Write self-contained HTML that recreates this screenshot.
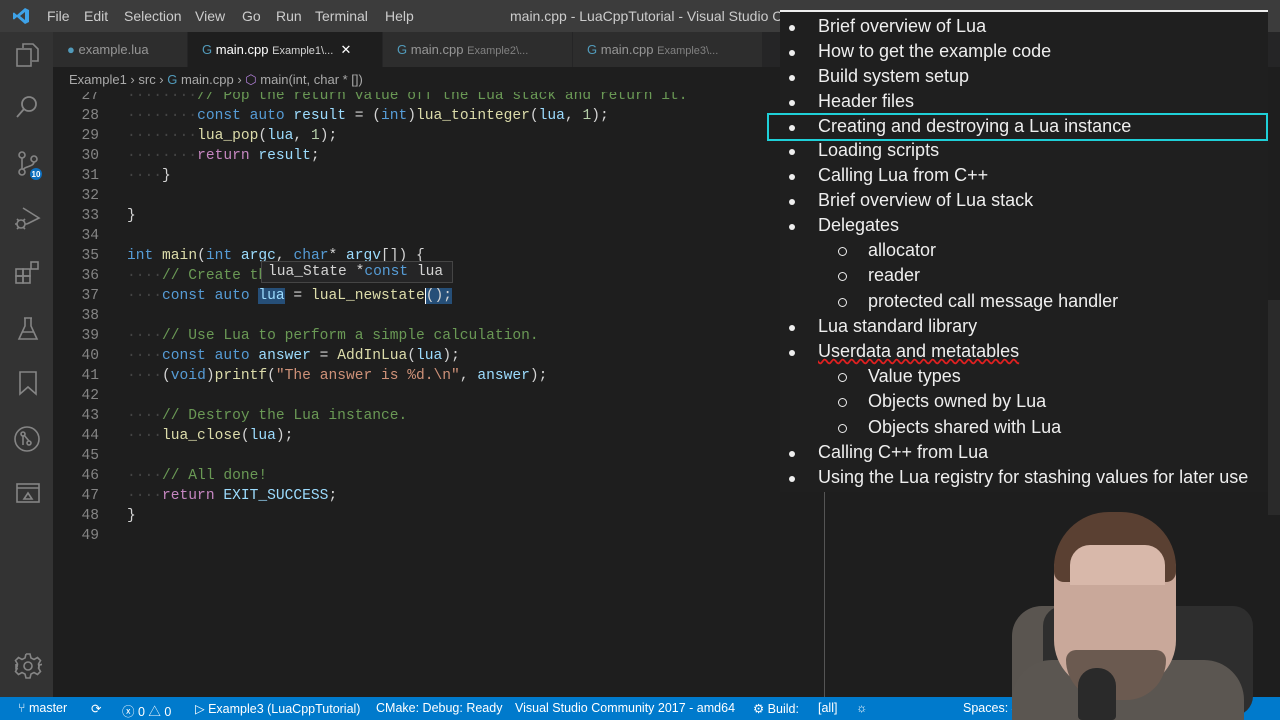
<!DOCTYPE html>
<html><head><meta charset="utf-8"><style>
*{margin:0;padding:0;box-sizing:border-box}
body{width:1280px;height:720px;overflow:hidden;background:#1e1e1e;font-family:"Liberation Sans",sans-serif;position:relative}
.abs{position:absolute}
#title{left:0;top:0;width:1280px;height:32px;background:#3c3c3c;color:#ccc;font-size:14px}
#title span{position:absolute;top:8px}
#act{left:0;top:32px;width:53px;height:665px;background:#333}
#tabs{left:53px;top:32px;width:1227px;height:35px;background:#252526}
.tab{position:absolute;top:0;height:35px;line-height:35px;font-size:13px;color:#969696;background:#2d2d2d;border-right:1px solid #252526;padding-left:14px}
.tab .s{font-size:11px;opacity:.8}
#crumb{left:53px;top:67px;width:1227px;height:25px;background:#1e1e1e;color:#aaa;font-size:13px;line-height:25px;padding-left:16px}
#code{left:53px;top:92px;width:727px;height:605px;overflow:hidden}
.ln{position:absolute;left:0;width:46px;text-align:right;color:#858585;font:14.6px/20px "Liberation Mono",monospace}
.cl{position:absolute;left:74px;white-space:pre;color:#d4d4d4;font:14.6px/20px "Liberation Mono",monospace}
.k{color:#569cd6}.c{color:#6a9955}.f{color:#dcdcaa}.v{color:#9cdcfe}.r{color:#c586c0}.n{color:#b5cea8}.st{color:#ce9178}.w{color:#444}
#status{left:0;top:697px;width:1280px;height:23px;background:#007acc;color:#fff;font-size:12.5px}
#status span{position:absolute;top:4px}
#slide{left:780px;top:10px;width:488px;height:482px;background:#1f1f1f;border-top:2px solid #eee;color:#eee;font-family:"Liberation Sans",sans-serif;font-size:18px}
.it{position:absolute;left:38px;white-space:nowrap}
.it:before{content:"";position:absolute;left:-29px;top:9px;width:6px;height:6px;border-radius:50%;background:#eee}
.sub{left:88px}
.sub:before{left:-30px;top:7px;width:7px;height:7px;background:none;border:1.5px solid #eee}
svg{position:absolute}
</style></head><body>
<div id="title" class="abs">
<svg style="left:12px;top:7px" width="18" height="18" viewBox="0 0 18 18"><path d="M13 1 L17 3 V15 L13 17 L5 10 L2 12.5 L1 12 V6 L2 5.5 L5 8 Z M13 5 L8 9 L13 13 Z" fill="#3ea2e8"/></svg>
<span style="left:47px">File</span><span style="left:84px">Edit</span><span style="left:124px">Selection</span><span style="left:195px">View</span><span style="left:242px">Go</span><span style="left:276px">Run</span><span style="left:315px">Terminal</span><span style="left:385px">Help</span>
<span style="left:510px">main.cpp - LuaCppTutorial - Visual Studio Code</span>
</div>
<div id="act" class="abs">
<svg style="left:14px;top:10px" width="26" height="26" viewBox="0 0 26 26" fill="none" stroke="#858585" stroke-width="1.6"><path d="M9 6V2h10l5 5v12h-6"/><rect x="3" y="7" width="14" height="17"/></svg>
<svg style="left:14px;top:62px" width="26" height="26" viewBox="0 0 26 26" fill="none" stroke="#858585" stroke-width="1.8"><circle cx="15" cy="10" r="7"/><path d="M10 15 3 23"/></svg>
<svg style="left:14px;top:118px" width="30" height="30" viewBox="0 0 30 30" fill="none" stroke="#858585" stroke-width="1.6"><circle cx="8" cy="5" r="3"/><circle cx="8" cy="22" r="3"/><circle cx="20" cy="9" r="3"/><path d="M8 8v11M20 12c0 5-10 4-11 8"/><circle cx="22" cy="24" r="6" fill="#0e70c0" stroke="none"/><text x="22" y="27" font-size="8" fill="#fff" stroke="none" text-anchor="middle" font-family="Liberation Sans" font-weight="bold">10</text></svg>
<svg style="left:13px;top:172px" width="28" height="28" viewBox="0 0 28 28" fill="none" stroke="#858585" stroke-width="1.6"><path d="M10 4 26 14 14 20"/><circle cx="8" cy="20" r="4"/><path d="M2 20h2M12 20h2M4 15l2 2M12 15l-2 2M4 25l2-2M12 25l-2-2"/></svg>
<svg style="left:14px;top:228px" width="28" height="28" viewBox="0 0 28 28" fill="none" stroke="#858585" stroke-width="1.6"><rect x="2" y="9" width="7" height="7"/><rect x="9" y="9" width="7" height="7"/><rect x="2" y="16" width="7" height="7"/><rect x="9" y="16" width="7" height="7"/><rect x="17" y="2" width="7" height="7"/></svg>
<svg style="left:16px;top:284px" width="24" height="26" viewBox="0 0 24 26" fill="none" stroke="#858585" stroke-width="1.6"><path d="M8 2h8M9 2v8L3 23h18L15 10V2M6 16h12"/></svg>
<svg style="left:18px;top:338px" width="20" height="26" viewBox="0 0 20 26" fill="none" stroke="#858585" stroke-width="1.6"><path d="M2 2h16v22l-8-7-8 7z"/></svg>
<svg style="left:13px;top:393px" width="28" height="28" viewBox="0 0 28 28" fill="none" stroke="#858585" stroke-width="1.6"><circle cx="14" cy="14" r="12"/><circle cx="10" cy="9" r="2"/><circle cx="16" cy="18" r="2"/><path d="M10 11v9M11 10l5 6"/></svg>
<svg style="left:15px;top:450px" width="26" height="22" viewBox="0 0 26 22" fill="none" stroke="#858585" stroke-width="1.6"><rect x="2" y="2" width="22" height="18"/><path d="M2 6h22M9 17l4-6 4 6z"/></svg>
<svg style="left:14px;top:620px" width="28" height="28" viewBox="0 0 28 28" fill="none" stroke="#858585" stroke-width="1.6"><circle cx="14" cy="14" r="4"/><path d="M12 2h4l1 4 3 1.5 3.5-2 3 3-2 3.5L25 15l0 0 -1 0 0 0 M12 2l-1 4-3 1.5-3.5-2-3 3 2 3.5L3 15l-1 1v-4M14 26h-2l-1-4-3-1.5-3.5 2-3-3 2-3.5M14 26h2l1-4 3-1.5 3.5 2 3-3-2-3.5 1-3 4-1v-3"/></svg>
</div>
<div id="tabs" class="abs">
<div class="tab" style="left:0;width:135px"><span style="color:#519aba">●</span> example.lua</div>
<div class="tab" style="left:135px;width:195px;background:#1e1e1e;color:#fff"><span style="color:#519aba">G</span> main.cpp <span class="s">Example1\...</span> &nbsp;✕</div>
<div class="tab" style="left:330px;width:190px"><span style="color:#519aba">G</span> main.cpp <span class="s">Example2\...</span></div>
<div class="tab" style="left:520px;width:190px"><span style="color:#519aba">G</span> main.cpp <span class="s">Example3\...</span></div>
</div>
<div id="crumb" class="abs">Example1 › src › <span style="color:#519aba">G</span> main.cpp › <span style="color:#b180d7">⬡</span> main(int, char * [])</div>
<div id="code" class="abs">
<div style="position:absolute;top:-6px;left:0;width:727px">
<div class="ln" style="top:0">27</div><div class="cl" style="top:0"><span class="w">········</span><span class="c">// Pop the return value off the Lua stack and return it.</span></div>
<div class="ln" style="top:20px">28</div><div class="cl" style="top:20px"><span class="w">········</span><span class="k">const auto</span> <span class="v">result</span> = (<span class="k">int</span>)<span class="f">lua_tointeger</span>(<span class="v">lua</span>, <span class="n">1</span>);</div>
<div class="ln" style="top:40px">29</div><div class="cl" style="top:40px"><span class="w">········</span><span class="f">lua_pop</span>(<span class="v">lua</span>, <span class="n">1</span>);</div>
<div class="ln" style="top:60px">30</div><div class="cl" style="top:60px"><span class="w">········</span><span class="r">return</span> <span class="v">result</span>;</div>
<div class="ln" style="top:80px">31</div><div class="cl" style="top:80px"><span class="w">····</span>}</div>
<div class="ln" style="top:100px">32</div>
<div class="ln" style="top:120px">33</div><div class="cl" style="top:120px">}</div>
<div class="ln" style="top:140px">34</div>
<div class="ln" style="top:160px">35</div><div class="cl" style="top:160px"><span class="k">int</span> <span class="f">main</span>(<span class="k">int</span> <span class="v">argc</span>, <span class="k">char</span>* <span class="v">argv</span>[]) {</div>
<div class="ln" style="top:180px">36</div><div class="cl" style="top:180px"><span class="w">····</span><span class="c">// Create the Lua instance.</span></div>
<div class="ln" style="top:200px">37</div><div class="cl" style="top:200px"><span class="w">····</span><span class="k">const auto</span> <span class="v" style="background:#264f78">lua</span> = <span class="f">luaL_newstate</span><span style="background:#264f78;border-left:1px solid #fff">();</span></div>
<div class="ln" style="top:220px">38</div>
<div class="ln" style="top:240px">39</div><div class="cl" style="top:240px"><span class="w">····</span><span class="c">// Use Lua to perform a simple calculation.</span></div>
<div class="ln" style="top:260px">40</div><div class="cl" style="top:260px"><span class="w">····</span><span class="k">const auto</span> <span class="v">answer</span> = <span class="f">AddInLua</span>(<span class="v">lua</span>);</div>
<div class="ln" style="top:280px">41</div><div class="cl" style="top:280px"><span class="w">····</span>(<span class="k">void</span>)<span class="f">printf</span>(<span class="st">"The answer is %d.\n"</span>, <span class="v">answer</span>);</div>
<div class="ln" style="top:300px">42</div>
<div class="ln" style="top:320px">43</div><div class="cl" style="top:320px"><span class="w">····</span><span class="c">// Destroy the Lua instance.</span></div>
<div class="ln" style="top:340px">44</div><div class="cl" style="top:340px"><span class="w">····</span><span class="f">lua_close</span>(<span class="v">lua</span>);</div>
<div class="ln" style="top:360px">45</div>
<div class="ln" style="top:380px">46</div><div class="cl" style="top:380px"><span class="w">····</span><span class="c">// All done!</span></div>
<div class="ln" style="top:400px">47</div><div class="cl" style="top:400px"><span class="w">····</span><span class="r">return</span> <span class="v">EXIT_SUCCESS</span>;</div>
<div class="ln" style="top:420px">48</div><div class="cl" style="top:420px">}</div>
<div class="ln" style="top:440px">49</div>
</div>
<div style="position:absolute;left:208px;top:169px;width:192px;height:22px;background:#252526;border:1px solid #454545;color:#d4d4d4;font:14.6px/20px 'Liberation Mono',monospace;padding-left:6px;white-space:pre">lua_State *<span class="k">const</span> lua</div>
</div>
<div class="abs" style="left:824px;top:492px;width:1px;height:205px;background:#555"></div>
<div class="abs" style="left:1268px;top:300px;width:12px;height:215px;background:#2a2a2a"></div>
<div id="slide" class="abs">
<div class="it" style="top:4px">Brief overview of Lua</div>
<div class="it" style="top:29px">How to get the example code</div>
<div class="it" style="top:54px">Build system setup</div>
<div class="it" style="top:79px">Header files</div>
<div class="it" style="top:104px">Creating and destroying a Lua instance</div>
<div class="it" style="top:128px">Loading scripts</div>
<div class="it" style="top:153px">Calling Lua from C++</div>
<div class="it" style="top:178px">Brief overview of Lua stack</div>
<div class="it" style="top:203px">Delegates</div>
<div class="it sub" style="top:228px">allocator</div>
<div class="it sub" style="top:253px">reader</div>
<div class="it sub" style="top:279px">protected call message handler</div>
<div class="it" style="top:304px">Lua standard library</div>
<div class="it" style="top:329px;text-decoration:underline wavy #e02020">Userdata and metatables</div>
<div class="it sub" style="top:354px">Value types</div>
<div class="it sub" style="top:379px">Objects owned by Lua</div>
<div class="it sub" style="top:405px">Objects shared with Lua</div>
<div class="it" style="top:430px">Calling C++ from Lua</div>
<div class="it" style="top:455px">Using the Lua registry for stashing values for later use</div>
</div>
<div class="abs" style="left:767px;top:113px;width:501px;height:28px;border:2px solid #1fd0d8"></div>
<div id="status" class="abs">
<span style="left:18px">⑂ master</span><span style="left:91px">⟳</span><span style="left:122px">ⓧ 0 △ 0</span><span style="left:195px">▷ Example3 (LuaCppTutorial)</span><span style="left:376px">CMake: Debug: Ready</span><span style="left:515px">Visual Studio Community 2017 - amd64</span><span style="left:753px">⚙ Build:</span><span style="left:818px">[all]</span><span style="left:856px">☼</span><span style="left:963px">Spaces: 4</span>
</div>
<div class="abs" style="left:1012px;top:606px;width:232px;height:114px;background:#5a5550;border-radius:30px 40px 0 0"></div>
<div class="abs" style="left:1043px;top:606px;width:210px;height:110px;background:#2e2e2e;border-radius:20px"></div>
<div class="abs" style="left:1012px;top:660px;width:232px;height:60px;background:#5b5651;border-radius:40px 40px 0 0"></div>
<div class="abs" style="left:1054px;top:515px;width:122px;height:175px;background:#c9a89a;border-radius:55px 55px 50px 50px"></div>
<div class="abs" style="left:1054px;top:512px;width:122px;height:70px;background:#5a4032;border-radius:55px 55px 10px 10px"></div>
<div class="abs" style="left:1070px;top:545px;width:95px;height:40px;background:#d8b8aa;border-radius:20px 20px 0 0"></div>
<div class="abs" style="left:1066px;top:650px;width:100px;height:50px;background:#6b5a50;border-radius:10px 10px 40px 40px"></div>
<div class="abs" style="left:1078px;top:668px;width:38px;height:52px;background:#2a2a2a;border-radius:18px 18px 4px 4px"></div>
</body></html>
